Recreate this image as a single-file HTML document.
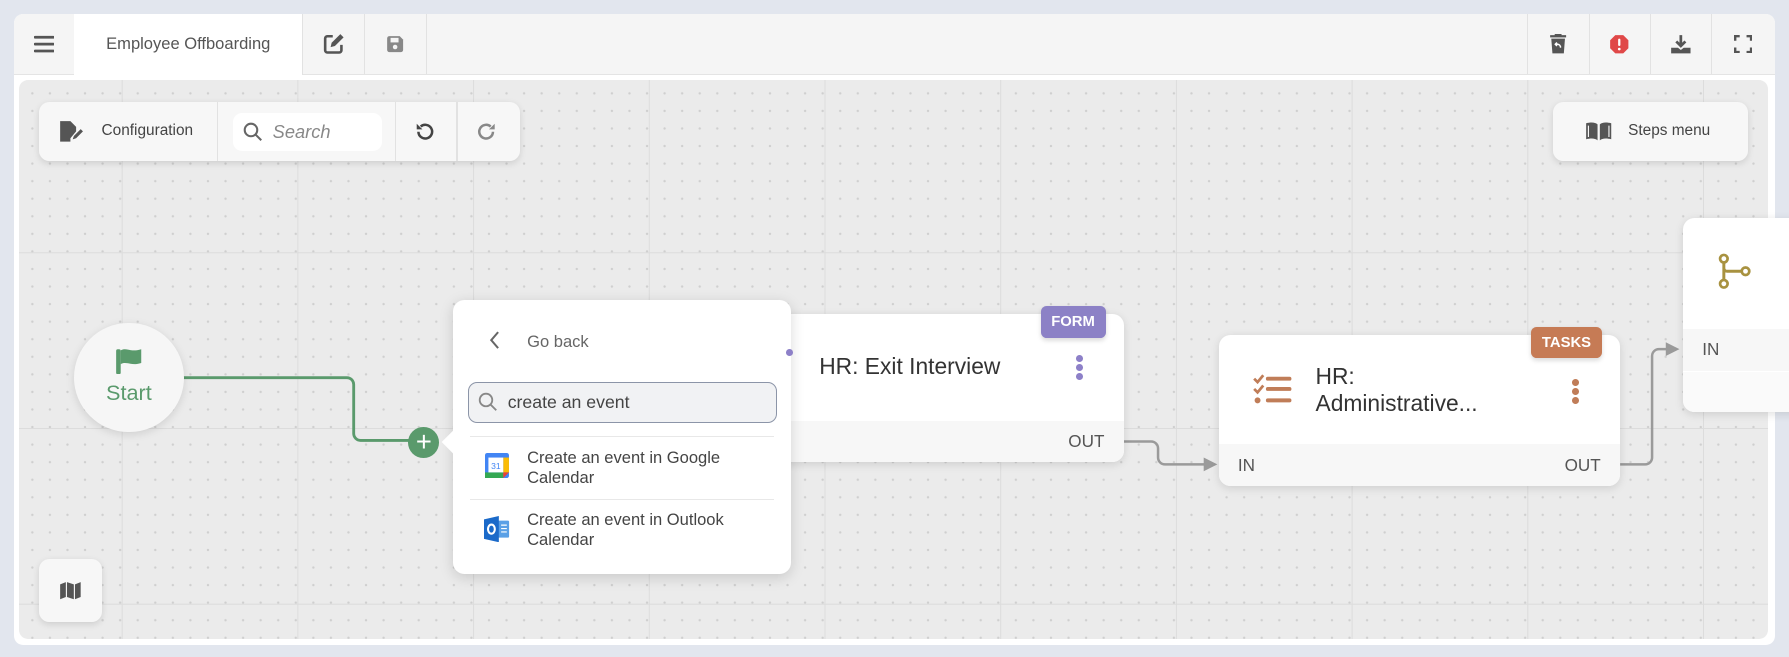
<!DOCTYPE html>
<html><head><meta charset="utf-8"><style>
html,body{margin:0;padding:0;}
body{width:1568px;height:576px;overflow:hidden;background:#e2e6ee;font-family:"Liberation Sans",sans-serif;zoom:1.14094;position:relative;color:#444;}
.abs{position:absolute;}
#card{left:12px;top:12px;width:1544px;height:553px;background:#fff;border-radius:8px;overflow:hidden;}
#hdr{left:0;top:0;width:1544px;height:53px;background:#f5f5f5;border-bottom:1px solid #e4e4e4;}
.cell{position:absolute;top:0;height:53px;border-right:1px solid #e2e2e2;display:flex;align-items:center;justify-content:center;}
#canvas{left:5px;top:58px;width:1533px;height:490px;border-radius:8px;overflow:hidden;
background-color:#ebebeb;
background-image:linear-gradient(#dcdcdc 1px,transparent 1px),linear-gradient(90deg,#dcdcdc 1px,transparent 1px),radial-gradient(circle,#cfcfcf 0.9px,transparent 1.2px);
background-size:154px 154px,154px 154px,15.4px 15.4px;background-position:0 -3px,90px 0,4px 4px;}
.panel{background:#f7f7f7;border-radius:9px;box-shadow:0 2px 6px rgba(0,0,0,.12);}
.node{background:#fff;border-radius:10px;box-shadow:0 2px 8px rgba(0,0,0,.12);overflow:hidden;}
.foot{position:absolute;left:0;right:0;background:#f7f7f7;font-size:15px;color:#555;}
.badge{position:absolute;color:#fff;font-weight:bold;font-size:13px;border-radius:5px;display:flex;align-items:center;justify-content:center;box-shadow:0 2px 4px rgba(0,0,0,.15);}
.dots span{display:block;width:6px;height:6px;border-radius:50%;margin:2px 0;}
</style></head><body>
<div id="card" class="abs">
 <div id="hdr" class="abs">
  <div class="cell" style="left:0;width:53px;"><svg width="18" height="16" viewBox="0 0 18 16"><path d="M1 2h16M1 8h16M1 14h16" stroke="#555" stroke-width="2.4" stroke-linecap="round"/></svg></div>
  <div class="cell" style="left:53px;width:200px;background:#fff;font-size:14.5px;color:#555;height:54px;">Employee Offboarding</div>
  <div class="cell" style="left:254px;width:53px;"><svg width="19" height="19" viewBox="0 0 20 20"><path d="M9 3H4a2 2 0 0 0-2 2v11a2 2 0 0 0 2 2h11a2 2 0 0 0 2-2v-5" fill="none" stroke="#555" stroke-width="2.4"/><path d="M16 1l3 3-8 8-4 1 1-4z" fill="#555"/></svg></div>
  <div class="cell" style="left:307px;width:54px;"><svg width="16" height="16" viewBox="0 0 16 16"><path d="M1 3a2 2 0 0 1 2-2h9l3 3v9a2 2 0 0 1-2 2H3a2 2 0 0 1-2-2z" fill="#888"/><rect x="4" y="2.5" width="7" height="4" fill="#f5f5f5"/><circle cx="8" cy="10.5" r="2" fill="#f5f5f5"/></svg></div>
  <div class="cell" style="left:1326px;width:54px;border-left:1px solid #e2e2e2;"><svg width="16" height="18" viewBox="0 0 16 18"><rect x="1" y="1" width="14" height="2" fill="#555"/><rect x="5" y="0" width="6" height="2" fill="#555"/><path d="M2 4h12l-1 13H3z" fill="#555"/><path d="M10 12a2.5 2.5 0 0 0-2.5-3H6M7 7.5L5.5 9 7 10.5" stroke="#fff" stroke-width="1.3" fill="none"/></svg></div>
  <div class="cell" style="left:1380px;width:54px;"><svg width="18" height="18" viewBox="0 0 18 18"><path d="M5.5 1h7L17 5.5v7L12.5 17h-7L1 12.5v-7z" fill="#e04848"/><rect x="8" y="4" width="2" height="6.5" rx="1" fill="#fff"/><circle cx="9" cy="13.2" r="1.2" fill="#fff"/></svg></div>
  <div class="cell" style="left:1434px;width:54px;"><svg width="19" height="18" viewBox="0 0 19 18"><path d="M9.5 1v9M5.5 6.5l4 4 4-4" stroke="#555" stroke-width="2.4" fill="none"/><path d="M1 12h6l2.5 2 2.5-2h6v5H1z" fill="#555"/></svg></div>
  <div class="cell" style="left:1488px;width:56px;border-right:none;"><svg width="16" height="16" viewBox="0 0 16 16"><path d="M1 5V1h4M11 1h4v4M15 11v4h-4M5 15H1v-4" stroke="#555" stroke-width="2.2" fill="none"/></svg></div>
 </div>
 <div id="canvas" class="abs"></div>
</div>

<div class="abs panel" style="left:34px;top:89px;width:422px;height:52px;">
 <svg class="abs" style="left:18px;top:16px" width="22" height="20" viewBox="0 0 22 20"><path d="M1 1h9l5 5v4l-5 6v3H1z" fill="#555"/><path d="M12 17l1-3 6-6 2 2-6 6z" fill="#555"/></svg>
 <div class="abs" style="left:55px;top:18px;font-size:13.5px;color:#444;">Configuration</div>
 <div class="abs" style="left:156px;top:0;width:1px;height:52px;background:#e2e2e2"></div>
 <div class="abs" style="left:170px;top:10px;width:131px;height:33px;background:#fff;border-radius:8px;"></div>
 <svg class="abs" style="left:179px;top:18px" width="17" height="17" viewBox="0 0 17 17"><circle cx="7" cy="7" r="5.5" stroke="#666" stroke-width="1.8" fill="none"/><path d="M11 11l5 5" stroke="#666" stroke-width="1.8"/></svg>
 <div class="abs" style="left:205px;top:17px;font-size:16px;color:#888;font-style:italic;">Search</div>
 <div class="abs" style="left:312px;top:0;width:1px;height:52px;background:#e2e2e2"></div>
 <svg class="abs" style="left:330px;top:18px" width="17" height="17" viewBox="0 0 17 17"><path d="M3 8.5A6 6 0 1 0 5 4" stroke="#444" stroke-width="2.2" fill="none"/><path d="M1.5 1.5v5h5z" fill="#444"/></svg>
 <div class="abs" style="left:366px;top:0;width:1px;height:52px;background:#e2e2e2"></div>
 <svg class="abs" style="left:384px;top:18px" width="17" height="17" viewBox="0 0 17 17"><path d="M14 8.5A6 6 0 1 1 12 4" stroke="#888" stroke-width="2.2" fill="none"/><path d="M15.5 1.5v5h-5z" fill="#888"/></svg>
</div>

<div class="abs panel" style="left:1361px;top:89px;width:171px;height:52px;">
 <svg class="abs" style="left:28px;top:17px" width="24" height="18" viewBox="0 0 24 18"><path d="M1 2c4-1 8-1 10 1v14c-2-2-6-2-10-1z" fill="#555"/><path d="M23 2c-4-1-8-1-10 1v14c2-2 6-2 10-1z" fill="#555"/><path d="M3 4v10M21 4v10" stroke="#f7f7f7" stroke-width="1"/></svg>
 <div class="abs" style="left:66px;top:18px;font-size:13.5px;color:#444;">Steps menu</div>
</div>

<div class="abs panel" style="left:34px;top:490px;width:55px;height:55px;">
 <svg class="abs" style="left:18px;top:19px" width="20" height="17" viewBox="0 0 20 17"><path d="M1 3l5-2v13l-5 2zM7 1l6 2v13l-6-2zM14 3l5-2v13l-5 2z" fill="#555"/></svg>
</div>

<svg class="abs" style="left:0;top:0" width="1568" height="576">
 <path d="M160 331H304a6 6 0 0 1 6 6V380a6 6 0 0 0 6 6H360" stroke="#5a9a6c" stroke-width="2.5" fill="none"/>
 <path d="M985 387H1009a6 6 0 0 1 6 6V401a6 6 0 0 0 6 6H1058" stroke="#9a9a9a" stroke-width="2.2" fill="none"/>
 <path d="M1055 401l12 6-12 6z" fill="#9a9a9a"/>
 <path d="M1420 407H1442a6 6 0 0 0 6-6V312a6 6 0 0 1 6-6H1463" stroke="#9a9a9a" stroke-width="2.2" fill="none"/>
 <path d="M1460 300l12 6-12 6z" fill="#9a9a9a"/>
</svg>

<div class="abs" style="left:65px;top:283px;width:96px;height:96px;border-radius:50%;background:#f6f6f6;box-shadow:0 2px 8px rgba(0,0,0,.12);">
 <svg class="abs" style="left:36px;top:21px" width="25" height="24" viewBox="0 0 25 24"><rect x="1" y="2" width="4" height="22" rx="1.5" fill="#5a9a6c"/><path d="M5 3c5-3 9 2 18-1v12c-9 3-13-2-18 1z" fill="#5a9a6c"/></svg>
 <div class="abs" style="left:0;width:96px;top:50px;text-align:center;font-size:19px;color:#5a9a6c;">Start</div>
</div>
<div class="abs" style="left:358px;top:374px;width:27px;height:27px;border-radius:50%;background:#5a9a6c;color:#fff;font-size:24px;line-height:26px;text-align:center;">+</div>

<div class="abs node" style="left:665px;top:275px;width:320px;height:130px;">
 <div class="foot" style="top:94px;height:36px;"><span class="abs" style="right:17px;top:10px;">OUT</span></div>
 <div class="abs" style="left:53px;top:34px;font-size:20px;color:#333;">HR: Exit Interview</div>
 <div class="abs dots" style="left:278px;top:34px;"><span style="background:#8d80c8"></span><span style="background:#8d80c8"></span><span style="background:#8d80c8"></span></div>
</div>
<div class="badge" style="left:912px;top:268px;width:57px;height:28px;background:#8c81c6;">FORM</div>

<div class="abs node" style="left:1068px;top:294px;width:352px;height:132px;">
 <div class="foot" style="top:95px;height:37px;"><span class="abs" style="left:17px;top:11px;">IN</span><span class="abs" style="right:17px;top:11px;">OUT</span></div>
 <svg class="abs" style="left:30px;top:33px" width="34" height="28" viewBox="0 0 34 28"><path d="M1 5l3 3 5-6M1 14l3 3 5-6" stroke="#c07d58" stroke-width="2.4" fill="none"/><circle cx="4" cy="24" r="2.6" fill="#c07d58"/><path d="M13 5h19M13 14h19M13 24h19" stroke="#c07d58" stroke-width="3.4" stroke-linecap="round"/></svg>
 <div class="abs" style="left:85px;top:24px;font-size:20px;color:#333;line-height:24px;">HR:<br>Administrative...</div>
 <div class="abs dots" style="left:310px;top:36px;"><span style="background:#c07d58"></span><span style="background:#c07d58"></span><span style="background:#c07d58"></span></div>
</div>
<div class="badge" style="left:1342px;top:287px;width:62px;height:27px;background:#c67b55;">TASKS</div>

<div class="abs node" style="left:1475px;top:191px;width:120px;height:170px;">
 <div class="foot" style="top:97px;height:37px;background:#f7f7f7;"><span class="abs" style="left:17px;top:10px;">IN</span></div>
 <div class="foot" style="top:135px;height:35px;background:#fafafa;"></div>
 <svg class="abs" style="left:30px;top:31px" width="32" height="32" viewBox="0 0 32 32"><circle cx="6" cy="5" r="3.3" stroke="#a89240" stroke-width="2.4" fill="none"/><circle cx="6" cy="27" r="3.3" stroke="#a89240" stroke-width="2.4" fill="none"/><circle cx="25" cy="16" r="3.3" stroke="#a89240" stroke-width="2.4" fill="none"/><path d="M6 8.5v15M6 13a3 3 0 0 0 3 3h12.5" stroke="#a89240" stroke-width="2.6" fill="none"/></svg>
</div>

<div class="abs" style="left:397px;top:263px;width:296px;height:240px;background:#fff;border-radius:10px;box-shadow:0 3px 12px rgba(0,0,0,.15);">
 <div class="abs" style="left:-7px;top:117px;width:14px;height:14px;background:#fff;transform:rotate(45deg);"></div>
 <svg class="abs" style="left:32px;top:27px" width="10" height="16" viewBox="0 0 10 16"><path d="M8 1L2 8l6 7" stroke="#666" stroke-width="1.8" fill="none"/></svg>
 <div class="abs" style="left:65px;top:28px;font-size:14.5px;color:#666;">Go back</div>
 <div class="abs" style="left:13px;top:72px;width:269px;height:34px;background:#f1f2f4;border:1px solid #8c95a8;border-radius:8px;"></div>
 <svg class="abs" style="left:22px;top:81px" width="17" height="17" viewBox="0 0 17 17"><circle cx="7" cy="7" r="5.5" stroke="#888" stroke-width="1.6" fill="none"/><path d="M11 11l5 5" stroke="#888" stroke-width="1.6"/></svg>
 <div class="abs" style="left:48px;top:81px;font-size:15.5px;color:#444;">create an event</div>
 <div class="abs" style="left:15px;top:119px;width:266px;height:1px;background:#e8e8e8;"></div>
 <svg class="abs" style="left:28px;top:134px" width="21" height="22" viewBox="0 0 21 22"><rect x="0" y="0" width="21" height="22" rx="2" fill="#4285f4"/><rect x="0" y="17" width="16" height="5" fill="#34a853"/><rect x="16" y="4" width="5" height="13" fill="#fbbc04"/><path d="M16 17h5l-5 5z" fill="#ea4335"/><rect x="3" y="4" width="13" height="13" fill="#fff"/><text x="9.5" y="14" font-size="7.5" text-anchor="middle" fill="#4285f4" font-family="Liberation Sans">31</text></svg>
 <div class="abs" style="left:65px;top:130px;font-size:14.5px;color:#444;line-height:17.5px;">Create an event in Google<br>Calendar</div>
 <div class="abs" style="left:15px;top:174px;width:266px;height:1px;background:#e8e8e8;"></div>
 <svg class="abs" style="left:27px;top:189px" width="23" height="23" viewBox="0 0 23 23"><rect x="9" y="4" width="13" height="15" rx="1" fill="#5aa0e6"/><path d="M0 3l13-3v23L0 20z" fill="#1b6ac9"/><ellipse cx="6.5" cy="11.5" rx="3" ry="4" stroke="#fff" stroke-width="1.8" fill="none"/><path d="M15 8h5M15 11h5M15 14h5" stroke="#fff" stroke-width="1"/></svg>
 <div class="abs" style="left:65px;top:184px;font-size:14.5px;color:#444;line-height:17.5px;">Create an event in Outlook<br>Calendar</div>
</div>
<div class="abs" style="left:689px;top:306px;width:6px;height:6px;border-radius:50%;background:#8d80c8;"></div>
</body></html>
